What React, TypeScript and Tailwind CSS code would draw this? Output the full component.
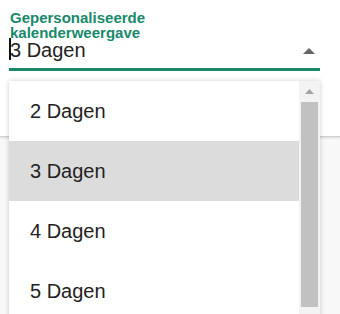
import React from "react";

export default function App() {
  const items = ["2 Dagen", "3 Dagen", "4 Dagen", "5 Dagen"];
  return (
    <div className="relative w-[340px] h-[314px] overflow-hidden bg-[#f8f8f8]" style={{ fontFamily: '"Liberation Sans", Arial, sans-serif' }}>
      <div className="h-[137px] bg-white border-b border-[#cfcfcf] shadow-[0_1px_2px_rgba(0,0,0,0.12)]">
        <div className="ml-[9px] w-[311px] pt-[10px]">
          <div className="pl-[1px] text-[15px] leading-[15px] font-bold text-[#17896b]">
            Gepersonaliseerde
            <br />
            kalenderweergave
          </div>
          <div className="relative flex items-start h-[25px]">
            <span className="absolute left-0 top-[-2px] w-[2px] h-[22px] bg-[#111]" />
            <span className="pl-[1px] text-[20px] leading-[20px] text-[#222]">3 Dagen</span>
            <svg className="absolute right-[5px] top-[8px]" width="12" height="6" viewBox="0 0 12 6">
              <polygon points="0,6 6,0 12,6" fill="#666" />
            </svg>
          </div>
          <div className="h-[3px] bg-[#17896b] mt-[3px]" />
        </div>
      </div>
      <div className="absolute left-[9px] top-[81px] w-[311px] h-[260px] bg-white flex shadow-[0_0_5px_rgba(0,0,0,0.2)]">
        <div className="flex-1 flex flex-col">
          {items.map((it, i) => (
            <div
              key={it}
              className={`h-[60px] shrink-0 flex items-center pl-[21px] text-[20px] text-[#222] ${i === 1 ? "bg-[#dcdcdc]" : ""}`}
            >
              {it}
            </div>
          ))}
        </div>
        <div className="w-[21px] bg-[#f3f3f3] flex flex-col items-center">
          <div className="h-[21px] flex items-center justify-center">
            <svg width="9" height="5" viewBox="0 0 9 5">
              <polygon points="0,5 4.5,0 9,5" fill="#a3a3a3" />
            </svg>
          </div>
          <div className="w-[17px] h-[205px] bg-[#c1c1c1]" />
        </div>
      </div>
    </div>
  );
}
